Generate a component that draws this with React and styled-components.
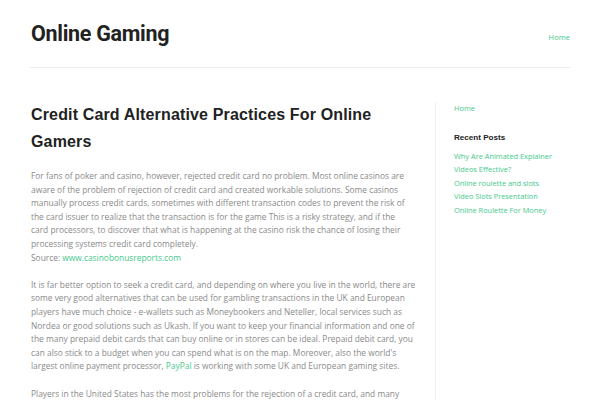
import React from "react";
import styled, { createGlobalStyle } from "styled-components";

const Global = createGlobalStyle`
  html, body { margin: 0; padding: 0; background: #fff; }
  body { font-family: "Open Sans", "Liberation Sans", sans-serif; }
  a { text-decoration: none; }
`;

const green = "#45c98c";

const Page = styled.div`
  width: 540px;
  margin: 0 auto;
  padding: 0 30px;
`;

const Header = styled.header`
  display: flex;
  justify-content: space-between;
  align-items: center;
  height: 67px;
  border-bottom: 1px solid #ececec;
`;

const SiteTitle = styled.h1`
  margin: 0;
  padding-left: 1px;
  font-family: Roboto, "Liberation Sans", sans-serif;
  font-weight: 700;
  font-size: 21.5px;
  color: #222;
  letter-spacing: -0.3px;
`;

const NavLink = styled.a`
  font-size: 7.6px;
  color: ${green};
  padding-top: 7px;
`;

const Body = styled.div`
  display: flex;
  margin-top: 34px;
`;

const Main = styled.main`
  width: 384.6px;
  padding-left: 1px;
  padding-right: 19.4px;
  border-right: 1px solid #eeeeee;
`;

const PostTitle = styled.h2`
  margin: 0 0 14px;
  font-family: "Liberation Sans", Arial, sans-serif;
  font-size: 16px;
  font-weight: 700;
  line-height: 26.5px;
  letter-spacing: 0.15px;
  color: #222;
`;

const Para = styled.p`
  margin: 0 0 13.6px;
  font-size: 8.4px;
  line-height: 13.6px;
  color: #8a8a8a;
`;

const Keep = styled.span`
  white-space: nowrap;
`;

const Link = styled.a`
  color: ${green};
`;

const Sidebar = styled.aside`
  flex: 1;
  padding-left: 18px;
`;

const SideList = styled.ul`
  list-style: none;
  margin: 0;
  padding: 0;
`;

const SideItem = styled.li`
  font-size: 7.4px;
  line-height: 13.5px;
  color: ${green};
`;

const WidgetTitle = styled.h3`
  margin: 15px 0 6px;
  font-family: "Liberation Sans", Arial, sans-serif;
  font-size: 8.1px;
  font-weight: 700;
  line-height: 13px;
  color: #222;
`;

export default function App() {
  return (
    <>
      <Global />
      <Page>
        <Header>
          <SiteTitle>Online Gaming</SiteTitle>
          <NavLink href="#">Home</NavLink>
        </Header>
        <Body>
          <Main>
            <PostTitle>Credit Card Alternative Practices For Online Gamers</PostTitle>
            <Para>
              For fans of poker and casino, however, rejected credit card no problem. Most online casinos are aware of the problem of rejection of credit card and created workable solutions. Some casinos manually process credit cards, sometimes with different transaction codes to prevent the risk of the card issuer to realize that the transaction is for the game This is a risky strategy, and if the <Keep>card processors,</Keep> to discover that what is happening at the casino risk the chance of losing their processing systems credit card completely.
              <br />
              Source: <Link href="#">www.casinobonusreports.com</Link>
            </Para>
            <Para>
              It is far better option to seek a credit card, and depending on where you live in the world, there are some very good alternatives that can be used for gambling transactions in the UK and European players have much choice - e-wallets such as Moneybookers and Neteller, local services such as Nordea or good solutions such as Ukash. If you want to keep your financial information and one of the many prepaid debit cards that can buy online or in stores can be ideal. Prepaid debit card, you can also stick to a budget when you can spend what is on the map. Moreover, also the world's largest online payment processor, <Link href="#">PayPal</Link> is working with some UK and European gaming sites.
            </Para>
            <Para>
              Players in the United States has the most problems for the rejection of a credit card, and many online casinos have stopped accepting players from the United States because of the legal issues.
            </Para>
          </Main>
          <Sidebar>
            <SideList>
              <SideItem>Home</SideItem>
            </SideList>
            <WidgetTitle>Recent Posts</WidgetTitle>
            <SideList>
              <SideItem>Why Are Animated Explainer Videos Effective?</SideItem>
              <SideItem>Online roulette and slots</SideItem>
              <SideItem>Video Slots Presentation</SideItem>
              <SideItem>Online Roulette For Money</SideItem>
            </SideList>
          </Sidebar>
        </Body>
      </Page>
    </>
  );
}
